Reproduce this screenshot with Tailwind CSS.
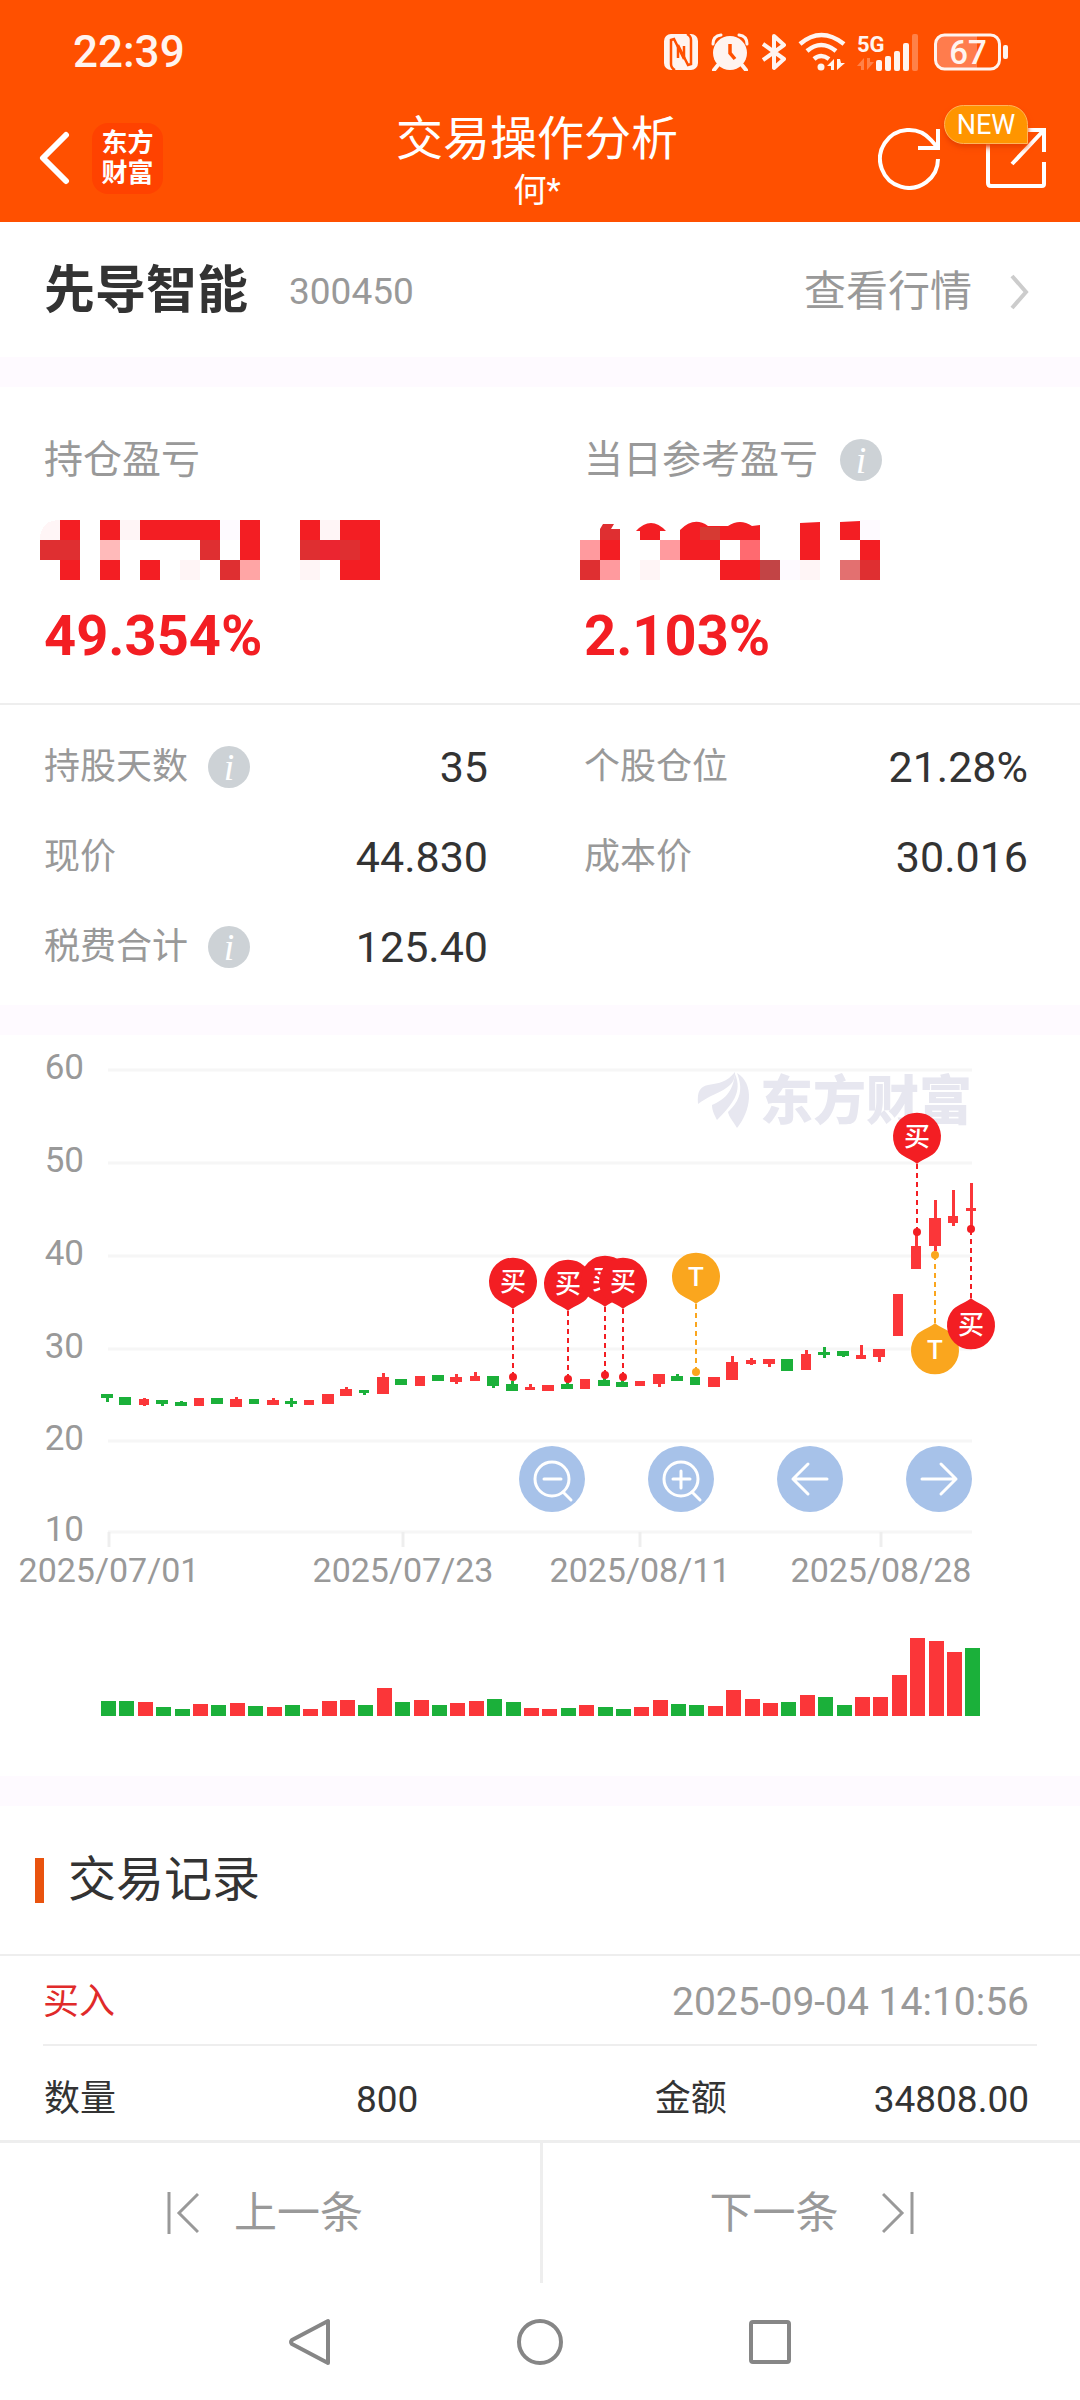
<!DOCTYPE html>
<html lang="zh-CN">
<head>
  <meta charset="UTF-8" />
  <meta name="viewport" content="width=device-width, initial-scale=1.0" />
  <title>交易操作分析</title>
  <script src="https://cdn.jsdelivr.net/npm/@tailwindcss/browser@4"></script>
</head>
<body class="min-h-screen flex flex-col bg-white text-[#333] font-[Roboto,'Noto_Sans_CJK_SC',sans-serif]">

  <!-- Header -->
  <header class="bg-[#ff5000] text-white pb-[14px]">
    <div class="h-[104px] pl-[73px] pr-[71px] flex items-center justify-between text-[#fff4f0]">
      <span class="text-[44px] font-medium">22:39</span>
      <div class="flex items-center gap-3">
        <!-- NFC -->
        <svg class="w-[36px] h-[38px]" viewBox="0 0 36 38" fill="none">
          <rect x="1" y="1" width="34" height="36" rx="7" fill="#fff4f0" />
          <path d="M12 37q-4-2-4-6V7l3-1 10 20V13" stroke="#ff5000" stroke-width="2.500" />
          <path d="M24 1q4 2 4 6v24l-3 1-10-20v13" stroke="#ff5000" stroke-width="2.500" />
        </svg>
        <!-- Alarm -->
        <svg class="w-[38px] h-[38px]" viewBox="0 0 38 38" fill="none">
          <circle cx="19" cy="20" r="17" fill="#fff4f0" />
          <path d="M2 11q0-8 8-9M36 11q0-8-8-9" stroke="#fff4f0" stroke-width="3" stroke-linecap="round" />
          <path d="m7 32-4 5M31 32l4 5" stroke="#fff4f0" stroke-width="4" stroke-linecap="round" />
          <path d="M19 11v9l5 6" stroke="#ff5000" stroke-width="3.500" />
        </svg>
        <!-- Bluetooth -->
        <svg class="w-[26px] h-[38px]" viewBox="0 0 26 38" fill="none" stroke="#fff4f0" stroke-width="4" stroke-linejoin="round">
          <path d="m2 11 21 15-10 9V3l10 9L2 27" />
        </svg>
        <!-- Wifi -->
        <svg class="w-[46px] h-[38px] overflow-visible" viewBox="0 0 46 38" fill="none">
          <path d="M1 11q21-18 44 0M8 18q14-12 29 0M15 26q7-6 15 0" stroke="#fff4f0" stroke-width="4.500" />
          <circle cx="22" cy="34" r="3.500" fill="#fff4f0" />
          <path d="M35 37V26l-7 7h4v4ZM38 26v11l8-7h-4l-1-4Z" fill="#fff4f0" />
        </svg>
        <!-- Signal -->
        <svg class="w-[63px] h-[38px] overflow-visible" viewBox="0 0 63 38" fill="#fff4f0">
          <text x="0" y="19" font-size="22" font-weight="700" font-family="Roboto">5G</text>
          <path d="M7 37V25l-7 8h4v4ZM10 25v12l7-8h-4v-4Z" opacity=".3" />
          <rect x="19" y="27" width="6" height="11" rx="2" />
          <rect x="28" y="23" width="6" height="15" rx="2" />
          <rect x="37" y="18" width="6" height="20" rx="2" />
          <rect x="46" y="10" width="6" height="28" rx="2" />
          <rect x="55" y="1" width="6" height="37" rx="2" opacity=".3" />
        </svg>
        <!-- Battery -->
        <svg class="w-[77px] h-[38px]" viewBox="0 0 77 38" fill="none">
          <path d="M11 3h34v32H11a8 8 0 0 1-8-8V11a8 8 0 0 1 8-8Z" fill="#ff7c4d" />
          <rect x="3.500" y="2" width="64" height="34" rx="9" stroke="#fff4f0" stroke-width="3" />
          <rect x="71" y="12" width="5" height="14" rx="2" fill="#fff4f0" />
          <text x="36" y="31" font-size="33" font-weight="500" font-family="Roboto" text-anchor="middle" fill="#fff4f0">67</text>
        </svg>
      </div>
    </div>

    <div class="h-[104px] pl-[38px] pr-8 grid grid-cols-[1fr_auto_1fr] items-center">
      <div class="flex items-center gap-[22px]">
        <button aria-label="返回">
          <svg class="w-8 h-[54px]" viewBox="0 0 32 54" fill="none" stroke="#fff" stroke-width="6" stroke-linecap="round" stroke-linejoin="round"><path d="M28 4 5 27l23 23" /></svg>
        </button>
        <a href="#" class="size-[71px] rounded-2xl bg-[#ff4200] flex flex-col items-center justify-center text-[26px] leading-[30px] font-bold"><span>东方</span><span>财富</span></a>
      </div>
      <div class="pr-3 pt-1 text-center">
        <h1 class="text-[47px] leading-[62px]">交易操作分析</h1>
        <p class="text-[33px] leading-[42px]">何*</p>
      </div>
      <div class="flex items-center justify-end gap-[42px]">
        <button aria-label="刷新">
          <svg class="size-16" viewBox="0 0 64 64" fill="none" stroke="#fff" stroke-width="4"><path d="M60 33a29 29 0 1 1-7-19l7 8M60 3v19H40" /></svg>
        </button>
        <button aria-label="分享" class="relative">
          <svg class="size-16" viewBox="0 0 64 64" fill="none" stroke="#fff" stroke-width="4"><path d="M30 4H4v53q0 3 3 3h51q2 0 2-2V36M40 4h20v22M60 4 28 38" /></svg>
          <span class="absolute -top-[21px] -left-[40px] w-[84px] h-[39px] rounded-full rounded-br-none bg-[#ff9500] border border-[#ffb45a] text-[27px] leading-[38px] shadow-md shadow-[#e64000]">NEW</span>
        </button>
      </div>
    </div>
  </header>

  <!-- Stock -->
  <section class="h-[135px] pt-1 pl-11 pr-[50px] flex items-center justify-between">
    <div class="flex items-center gap-[41px]">
      <h2 class="text-[51px] font-bold">先导智能</h2>
      <span class="text-[37px] text-[#999]">300450</span>
    </div>
    <a href="#" class="flex items-center gap-[38px] text-[42px] text-[#999]">查看行情
      <svg class="w-5 h-9" viewBox="0 0 20 36" fill="none" stroke="#ccc" stroke-width="4"><path d="m2 2 14 16L2 34" /></svg>
    </a>
  </section>

  <div class="h-[30px] bg-[#fefaff]"></div>

  <!-- Profit -->
  <section class="grid grid-cols-2 pt-[43px] pb-[37px] border-b-2 border-[#eee]">
    <div class="pl-11">
      <h3 class="text-[39px] leading-[60px] text-[#999]">持仓盈亏</h3>
      <svg class="mt-[30px] -ml-1 w-[340px] h-[60px]" viewBox="0 0 17 3" shape-rendering="crispEdges" role="img" aria-label="已隐藏">
        <path fill="#fff5f6" d="M0 1Q0 0 1 0V1ZM4 0h1v1h-1ZM14 0h1v1h-1ZM7 2h1v1h-1ZM13 2h1v1h-1Z" />
        <path fill="#fefaff" d="M9 0h1v1h-1Z" />
        <path fill="#f31e23" d="M1 0h1v1h-1ZM3 0h1v1h-1ZM5 0h4v1h-4ZM10 0h1v2h-1ZM13 0h1v1h-1ZM15 0h2v3h-2ZM1 2h1v1h-1ZM3 2h1v1h-1ZM5 2h1v1h-1Z" />
        <path fill="#df2f31" d="M0 1h2v1h-2ZM8 1h1v1h-1ZM13 1h1v1h-1ZM15 1h1v1h-1ZM9 2h1v1h-1Z" />
        <path fill="#eb2530" d="M14 1h1v1h-1Z" />
        <path fill="#ffbaba" d="M3 1h1v1h-1Z" />
        <path fill="#ffa5a5" d="M10 2h1v1h-1Z" />
      </svg>
      <p class="mt-[26px] text-[56px] leading-[60px] font-bold text-[#f31e23]">49.354%</p>
    </div>
    <div class="pl-11">
      <h3 class="flex items-center gap-[22px] text-[39px] leading-[60px] text-[#999]">当日参考盈亏
        <button aria-label="当日参考盈亏说明" class="size-[42px] rounded-full bg-[#cdd2d6] text-white text-[38px] leading-[40px] italic font-['Liberation_Serif',serif]">i</button>
      </h3>
      <svg class="mt-[30px] -ml-1 w-[300px] h-[60px]" viewBox="0 0 300 60" role="img" aria-label="已隐藏">
        <path fill="#fff5f6" d="M60 40h20v20h-20ZM220 40h20v20h-20Z" />
        <path fill="#fefaff" d="M280 0h20v20h-20ZM200 40h20v20h-20Z" />
        <path fill="#df2f31" d="M23 4h11l-3 5h9v11h-20v-11ZM0 40h20v20h-20ZM280 40h20v20h-20Z" />
        <path fill="#f31e23" d="M20 20h20v20h-20ZM56 11q15-16 30 0h-6v9h-20v-9ZM100 10q14-14 28-4h20q12-8 24 0l8-1v15h-40v20h-40ZM220 3l20-1v38h-20ZM260 2l20-1v19h-20ZM280 20h20v20h-20ZM140 40h40v20h-40Z" />
        <path fill="#d63a33" d="M120 7h20v13h-20Z" />
        <path fill="#ff9a9e" d="M0 20h20v20h-20ZM80 20h20v20h-20ZM20 40h20v20h-20Z" />
        <path fill="#ff6a70" d="M160 20h20v20h-20Z" />
        <path fill="#c24445" d="M180 40h20v20h-20Z" />
        <path fill="#e37070" d="M260 40h20v20h-20Z" />
      </svg>
      <p class="mt-[26px] text-[56px] leading-[60px] font-bold text-[#f31e23]">2.103%</p>
    </div>
  </section>

  <!-- Position details -->
  <dl class="grid grid-cols-2 pt-[17px] pb-[13px] text-[36px] leading-[90px]">
    <div class="pl-11 pr-[52px] flex items-center justify-between">
      <dt class="flex items-center gap-5 text-[#999]">持股天数
        <button aria-label="持股天数说明" class="size-[42px] rounded-full bg-[#cdd2d6] text-white text-[38px] leading-[40px] italic font-['Liberation_Serif',serif]">i</button>
      </dt>
      <dd class="text-[43px]">35</dd>
    </div>
    <div class="pl-11 pr-[52px] flex items-center justify-between">
      <dt class="text-[#999]">个股仓位</dt>
      <dd class="text-[43px]">21.28%</dd>
    </div>
    <div class="pl-11 pr-[52px] flex items-center justify-between">
      <dt class="text-[#999]">现价</dt>
      <dd class="text-[43px]">44.830</dd>
    </div>
    <div class="pl-11 pr-[52px] flex items-center justify-between">
      <dt class="text-[#999]">成本价</dt>
      <dd class="text-[43px]">30.016</dd>
    </div>
    <div class="pl-11 pr-[52px] flex items-center justify-between">
      <dt class="flex items-center gap-5 text-[#999]">税费合计
        <button aria-label="税费合计说明" class="size-[42px] rounded-full bg-[#cdd2d6] text-white text-[38px] leading-[40px] italic font-['Liberation_Serif',serif]">i</button>
      </dt>
      <dd class="text-[43px]">125.40</dd>
    </div>
  </dl>

  <div class="h-[30px] bg-[#fefaff]"></div>

  <!-- Chart -->
  <section class="relative">
    <svg class="w-full block" viewBox="0 0 1080 741">
      <g id="grid" stroke="#f6f6f6" stroke-width="3"></g>
      <g fill="#e7e7f0">
        <path d="M698 69C697 56 700 52 708 50C720 48 727 47 735 37C736 55 715 56 698 69Z" />
        <path d="M717 85C715 81 712 76 712 70C724 65 733 57 735 39C743 57 732 70 717 85Z" />
        <path d="M737 93C733 86 729 82 728 77C741 65 743 53 737 38C755 49 751 76 737 93Z" />
        <text x="760" y="85" font-size="53" font-weight="900">东方财富</text>
      </g>
      <g id="labels" fill="#999" font-size="34"></g>
      <g id="candles"></g>
      <g id="volumes"></g>
      <g id="pins" font-size="26" font-weight="500" text-anchor="middle"></g>
    </svg>
    <div class="absolute top-[411px] right-[10%] flex gap-[63px]">
      <button aria-label="缩小" class="size-[66px] rounded-full bg-[#a7c2e9]">
        <svg class="size-full" viewBox="0 0 66 66" fill="none" stroke="#fff" stroke-width="3" stroke-linecap="round"><circle cx="33" cy="33" r="17" /><path d="M25 33h17M44 46l8 8" /></svg>
      </button>
      <button aria-label="放大" class="size-[66px] rounded-full bg-[#a7c2e9]">
        <svg class="size-full" viewBox="0 0 66 66" fill="none" stroke="#fff" stroke-width="3" stroke-linecap="round"><circle cx="33" cy="33" r="17" /><path d="M25 33h17M33 25v17M44 46l8 8" /></svg>
      </button>
      <button aria-label="向左" class="size-[66px] rounded-full bg-[#a7c2e9]">
        <svg class="size-full" viewBox="0 0 66 66" fill="none" stroke="#fff" stroke-width="3" stroke-linecap="round" stroke-linejoin="round"><path d="M50 33H16M31 18 16 33l15 15" /></svg>
      </button>
      <button aria-label="向右" class="size-[66px] rounded-full bg-[#a7c2e9]">
        <svg class="size-full" viewBox="0 0 66 66" fill="none" stroke="#fff" stroke-width="3" stroke-linecap="round" stroke-linejoin="round"><path d="M16 33h34M35 18l15 15-15 15" /></svg>
      </button>
    </div>
  </section>

  <div class="h-[30px] bg-[#fefaff]"></div>

  <!-- Records -->
  <section>
    <div class="h-[150px] pl-[35px] flex items-center gap-6 border-b-2 border-[#eee]">
      <span class="w-[9px] h-[45px] bg-[#e9530e]"></span>
      <h2 class="text-[48px]">交易记录</h2>
    </div>
    <div class="h-[90px] mx-[43px] pt-1 pr-2 flex items-center justify-between border-b-2 border-[#eee]">
      <span class="text-[36px] text-[#e02a2a]">买入</span>
      <time class="text-[39px] text-[#999]">2025-09-04 14:10:56</time>
    </div>
    <dl class="h-[94px] pt-3.5 pl-11 pr-[51px] flex items-center justify-between text-[36px]">
      <div class="w-[38%] flex justify-between"><dt>数量</dt><dd class="text-[37px]">800</dd></div>
      <div class="w-[38%] flex justify-between"><dt>金额</dt><dd class="text-[37px]">34808.00</dd></div>
    </dl>
  </section>

  <!-- Prev / next -->
  <div class="grid grid-cols-2 h-[143px] border-t-3 border-[#eee] text-[43px] text-[#999]">
    <button class="flex items-center justify-center gap-[35px] pr-2.5">
      <svg class="w-8 h-[42px]" viewBox="0 0 32 42" fill="none" stroke="#999" stroke-width="3"><path d="M2 0v42M31 2 12 21l19 19" /></svg>
      上一条
    </button>
    <button class="flex items-center justify-center gap-[43px] border-l-3 border-[#eee]">
      下一条
      <svg class="w-8 h-[42px]" viewBox="0 0 32 42" fill="none" stroke="#999" stroke-width="3"><path d="M30 0v42M1 2l19 19L1 40" /></svg>
    </button>
  </div>

  <nav class="h-[117px] px-[289px] flex items-center justify-between">
    <button aria-label="后退"><svg class="w-[42px] h-12" viewBox="0 0 42 48" fill="none" stroke="#868686" stroke-width="4" stroke-linejoin="round"><path d="M39 3v42L3 26q-2-2 0-4Z" /></svg></button>
    <button aria-label="主页"><svg class="size-12" viewBox="0 0 48 48" fill="none" stroke="#868686" stroke-width="4"><circle cx="24" cy="24" r="21" /></svg></button>
    <button aria-label="最近任务"><svg class="w-[42px] h-11" viewBox="0 0 42 44" fill="none" stroke="#868686" stroke-width="4"><rect x="2" y="2" width="38" height="40" rx="2" /></svg></button>
  </nav>

  <script>
    const RED = "#fb3639";
    const GREEN = "#1bb03a";
    const X0 = 107;
    const STEP = 18.39;

    // color, body top, body bottom, high, low, volume
    const days = [
      ["g",359,363,359,367,15],["g",362,370,362,370,15],["r",364,370,363,371,14],["g",365,369,365,371,9],
      ["g",367,371,366,371,7],["r",363,371,363,371,12],["g",363,369,363,369,11],["r",364,372,362,372,13],
      ["g",364,369,364,369,10],["r",365,370,363,370,9],["g",366,369,363,372,11],["r",365,370,365,370,7],
      ["r",359,369,359,369,15],["r",354,361,352,361,16],["g",355,358,355,360,11],["r",342,359,338,359,28],
      ["g",344,350,344,350,14],["r",341,351,341,351,16],["g",340,346,340,346,11],["r",342,347,339,349,13],
      ["r",341,346,337,346,15],["g",341,351,341,353,17],["g",349,356,346,356,14],["r",352,355,349,355,8],
      ["r",350,356,350,356,7],["g",349,354,345,354,8],["r",344,354,344,354,11],["g",345,351,343,351,9],
      ["g",347,352,345,352,7],["r",346,351,346,351,9],["r",339,349,339,352,16],["g",341,346,339,346,12],
      ["g",342,350,342,350,11],["r",342,352,342,352,10],["r",327,345,321,345,26],["r",325,329,323,330,17],
      ["r",324,329,324,332,13],["g",324,336,324,336,14],["r",319,335,315,335,21],["g",317,320,312,323,19],
      ["g",316,321,316,322,11],["r",320,324,310,324,19],["r",314,322,314,327,19],["r",259,301,259,301,41],
      ["r",211,234,198,234,78],["r",183,211,165,216,75],["r",181,188,155,191,64],["r",173,176,148,191,68]
    ];

    // x, circle center y, dot y, label
    const pins = [
      [513, 247, 342, "买"], [568, 249, 344, "买"], [605, 245, 340, "买"], [623, 247, 342, "买"],
      [696, 242, 337, "T"], [917, 102, 197, "买"], [935, 315, 220, "T"], [971, 290, 194, "买"]
    ];

    const levels = [[60, 35], [50, 128], [40, 221], [30, 314], [20, 406], [10, 497]];
    const dates = [["2025/07/01", 109], ["2025/07/23", 403], ["2025/08/11", 640], ["2025/08/28", 881]];

    document.getElementById("grid").innerHTML =
      levels.map(([, y]) => `<path d="M108 ${y}H972"/>`).join("") +
      dates.map(([, x]) => `<path stroke="#eee" d="M${x} ${497}v15"/>`).join("");

    document.getElementById("labels").innerHTML =
      levels.map(([v, y]) => `<text x="84" y="${y + 9}" font-size="35" text-anchor="end">${v}</text>`).join("") +
      dates.map(([d, x]) => `<text x="${x}" y="547" text-anchor="middle">${d}</text>`).join("");

    document.getElementById("candles").innerHTML = days.map(([c, top, bottom, high, low], i) => {
      const x = Math.round(X0 + i * STEP);
      const w = i % 3 === 2 || i > 42 && i !== 45 ? 10 : 12;
      return `<g fill="${c === "r" ? RED : GREEN}">
        <rect x="${x - w / 2}" y="${top}" width="${w}" height="${bottom - top}"/>
        <rect x="${x - 1}" y="${high}" width="3" height="${low - high}"/>
      </g>`;
    }).join("");

    document.getElementById("volumes").innerHTML = days.map((d, i) => {
      const x = Math.round(X0 + i * STEP - 6);
      const color = d[0] === "r" && i !== days.length - 1 ? RED : GREEN;
      return `<rect x="${x}" y="${681 - d[5]}" width="15" height="${d[5]}" fill="${color}"/>`;
    }).join("");

    document.getElementById("pins").innerHTML = pins.map(([x, y, dot, label]) => {
      const color = label === "T" ? "#faa61e" : "#f31e23";
      const up = dot < y;
      const tip = up ? y - 27 : y + 27;
      return `<path d="M${x} ${tip}V${dot}" stroke="${color}" stroke-width="2" stroke-dasharray="5 4"/>
        <circle cx="${x}" cy="${dot}" r="4" fill="${color}"/>
        <path transform="translate(${x} ${y})${up ? " rotate(180)" : ""}" fill="${color}"
          d="M0 27C-4 23-12 21-18 15.500A24 24 0 1 1 18 15.500C12 21 4 23 0 27Z"/>
        <text x="${x}" y="${y + 9}" fill="#fff">${label}</text>`;
    }).join("");
  </script>
</body>
</html>
